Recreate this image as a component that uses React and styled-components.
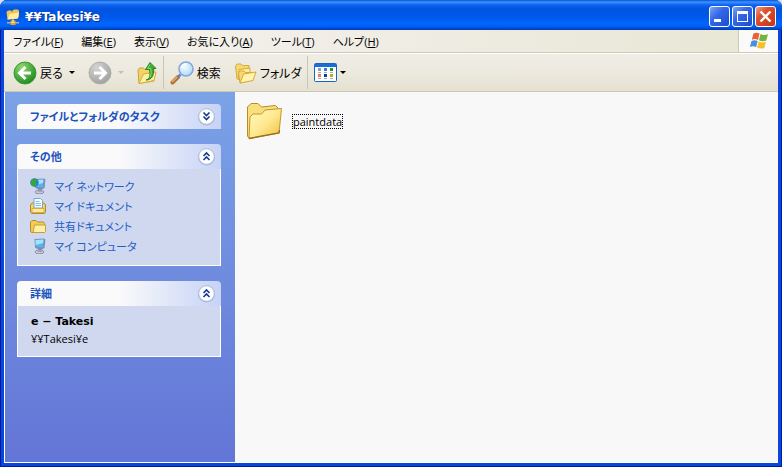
import React from "react";
import styled, { createGlobalStyle, css } from "styled-components";

const menuItems = [
  { label: "ファイル", hotkey: "F" },
  { label: "編集", hotkey: "E" },
  { label: "表示", hotkey: "V" },
  { label: "お気に入り", hotkey: "A" },
  { label: "ツール", hotkey: "T" },
  { label: "ヘルプ", hotkey: "H" }
];

class App extends React.Component {
  render() {
    return (
      <StyledWindow>
        <GlobalStyle />
        <TitleBar />
        <StyledFrame>
          <MenuBar />
          <Toolbar />
          <StyledContent>
            <Sidebar />
            <StyledFiles>
              <StyledFile type="button">
                <FolderLarge />
                <StyledFileName>paintdata</StyledFileName>
              </StyledFile>
            </StyledFiles>
          </StyledContent>
        </StyledFrame>
      </StyledWindow>
    );
  }
}

const TitleBar = () => (
  <StyledTitleBar>
    <NetFolderIcon />
    <StyledTitle>¥¥Takesi¥e</StyledTitle>
    <StyledCaption type="button" aria-label="最小化">
      <svg width="19" height="19" viewBox="0 0 19 19">
        <path d="M4 12h7v3H4z" fill="#fff" />
      </svg>
    </StyledCaption>
    <StyledCaption type="button" aria-label="最大化">
      <svg width="19" height="19" viewBox="0 0 19 19">
        <path d="M4 4h11v11H4zM5 7v7h9V7z" fill="#fff" fillRule="evenodd" />
      </svg>
    </StyledCaption>
    <StyledCaption type="button" aria-label="閉じる" $close>
      <svg width="19" height="19" viewBox="0 0 19 19">
        <path d="M4.500 4.500l10 10M14.500 4.500l-10 10" stroke="#fff" strokeWidth="2.4" />
      </svg>
    </StyledCaption>
  </StyledTitleBar>
);

const MenuBar = () => (
  <StyledMenuBar>
    <StyledMenu>
      {menuItems.map(item => (
        <StyledMenuItem type="button" key={item.hotkey}>
          {item.label}(<u>{item.hotkey}</u>)
        </StyledMenuItem>
      ))}
    </StyledMenu>
    <StyledLogo>
      <WindowsFlag />
    </StyledLogo>
  </StyledMenuBar>
);

const Toolbar = () => (
  <StyledToolbar>
    <StyledGroup>
      <StyledTool type="button">
        <ArrowCircle id="back" light="#8fd870" dark="#1c8a1c" rim="#3a9a35" />
        戻る
      </StyledTool>
      <StyledDrop type="button" aria-label="戻る履歴">
        <Caret />
      </StyledDrop>
      <StyledTool type="button" aria-label="進む" disabled>
        <ArrowCircle id="next" light="#d4d4d2" dark="#a0a0a0" rim="#b0b0ae" flip />
      </StyledTool>
      <StyledDrop type="button" aria-label="進む履歴" disabled>
        <Caret color="#c4c2b4" />
      </StyledDrop>
      <StyledTool type="button" aria-label="上へ">
        <UpIcon />
      </StyledTool>
    </StyledGroup>
    <StyledGroup>
      <StyledTool type="button">
        <SearchIcon />
        検索
      </StyledTool>
      <StyledTool type="button" $spaced>
        <FoldersIcon />
        フォルダ
      </StyledTool>
    </StyledGroup>
    <StyledGroup $last>
      <StyledTool type="button" aria-label="表示方法">
        <ViewsIcon />
        <Caret />
      </StyledTool>
    </StyledGroup>
  </StyledToolbar>
);

const Panel = ({ title, collapsed, children }) => (
  <StyledPanel>
    <StyledPanelHeader>
      <StyledPanelTitle>{title}</StyledPanelTitle>
      <StyledToggle type="button" aria-label={title} aria-expanded={!collapsed}>
        <Chevrons down={collapsed} />
      </StyledToggle>
    </StyledPanelHeader>
    {collapsed ? null : <StyledPanelBody>{children}</StyledPanelBody>}
  </StyledPanel>
);

const Sidebar = () => (
  <StyledSidebar>
    <Panel title="ファイルとフォルダのタスク" collapsed />
    <Panel title="その他">
      <StyledPlace href="#network">
        <NetworkIcon />
        マイ ネットワーク
      </StyledPlace>
      <StyledPlace href="#documents">
        <DocumentsIcon />
        マイ ドキュメント
      </StyledPlace>
      <StyledPlace href="#shared">
        <FolderSmall />
        共有ドキュメント
      </StyledPlace>
      <StyledPlace href="#computer">
        <ComputerIcon />
        マイ コンピュータ
      </StyledPlace>
    </Panel>
    <Panel title="詳細">
      <StyledDetail $bold>e − Takesi</StyledDetail>
      <StyledDetail>¥¥Takesi¥e</StyledDetail>
    </Panel>
  </StyledSidebar>
);

// Icons
const Caret = ({ color = "#000" }) => (
  <svg width="6" height="3" viewBox="0 0 6 3">
    <path d="M0 0h6L3 3z" fill={color} />
  </svg>
);

const Chevrons = ({ down }) => (
  <svg width="19" height="19" viewBox="0 0 19 19">
    <circle cx="9.5" cy="10" r="8.5" fill="#8d9cc8" opacity="0.6" />
    <circle cx="9.5" cy="9.5" r="7.8" fill="#fff" stroke="#b4bede" />
    <path
      d={down ? "M6.5 5.5l3 3 3-3M6.5 9.5l3 3 3-3" : "M6.5 9l3-3 3 3M6.5 13l3-3 3 3"}
      fill="none"
      stroke="#14398f"
      strokeWidth="1.6"
    />
  </svg>
);

const ArrowCircle = ({ id, light, dark, rim, flip }) => (
  <svg width="24" height="24" viewBox="0 0 24 24">
    <defs>
      <radialGradient id={id} cx="0.35" cy="0.25" r="0.8">
        <stop offset="0" stopColor={light} />
        <stop offset="1" stopColor={dark} />
      </radialGradient>
    </defs>
    <circle cx="12" cy="12" r="11" fill={`url(#${id})`} stroke={rim} />
    <path
      d={flip ? "M6 12h11M11.500 6l6 6-6 6" : "M18 12H7M12.500 6l-6 6 6 6"}
      fill="none"
      stroke="#fff"
      strokeWidth="3"
    />
  </svg>
);

const UpIcon = () => (
  <svg width="22" height="24" viewBox="0 0 22 24">
    <path d="M1 9l1.500-2h4L8 8.500h9V20L2 22.500z" fill="#f3d268" stroke="#cda136" />
    <path d="M2 22.500L6.500 13l12.500-2-2 8.500z" fill="#fdf0a4" stroke="#d9ae3c" />
    <path
      d="M9 19c4-1 4.500-4.500 3.500-10.500H8.500L13 1.500l6 6h-3c1.500 6.500-1 11.500-7 11.500z"
      fill="#3fae35"
      stroke="#1e7d1e"
      strokeWidth="0.9"
    />
    <path d="M13 3.500l-2.500 4h3c1 3 .8 6-.3 8.500" fill="none" stroke="#8edb6c" />
  </svg>
);

const SearchIcon = () => (
  <svg width="24" height="24" viewBox="0 0 24 24">
    <defs>
      <radialGradient id="lens" cx="0.4" cy="0.35" r="0.7">
        <stop offset="0" stopColor="#f4fcff" />
        <stop offset="1" stopColor="#a8daf8" />
      </radialGradient>
    </defs>
    <path d="M2.500 21.500l5.500-5.500" stroke="#b5713c" strokeWidth="4" strokeLinecap="round" />
    <path d="M2.500 20.500l5-5" stroke="#efa868" strokeWidth="1.600" strokeLinecap="round" />
    <path d="M7.500 16.500l3-3" stroke="#6d83a8" strokeWidth="2.500" />
    <circle cx="16" cy="8" r="7" fill="url(#lens)" stroke="#86a5dc" strokeWidth="1.600" />
    <path d="M11.500 7a5 5 0 0 1 5-4" fill="none" stroke="#fff" strokeWidth="1.500" />
  </svg>
);

const FoldersIcon = () => (
  <svg width="24" height="24" viewBox="0 0 24 24">
    <g stroke="#d9a93a" strokeLinejoin="round">
      <path d="M2.500 5L4 3h4l1.500 1.500H16V16L5 18.500l-1-1z" fill="#f6d874" />
      <path d="M5 18.500l1-10L17 7v9z" fill="#fdeea2" />
      <path d="M5.500 12L7 10h4l1.500 1.500H20V19L7 22z" fill="#f6d874" />
      <path d="M7 22l3.500-9 12.500-2-3 8.500z" fill="#fff3ae" />
    </g>
  </svg>
);

const ViewsIcon = () => (
  <svg width="23" height="19" viewBox="0 0 23 19">
    <rect x="0.5" y="0.5" width="22" height="18" rx="1" fill="#fff" stroke="#1763c6" />
    <path d="M1 1h21v3H1z" fill="#1b6bd8" />
    <path d="M4 5h3v3H4z" fill="#8a9cc6" />
    <path d="M10 5h3v3h-3z" fill="#2b7be0" />
    <path d="M16 5h3v3h-3z" fill="#169a28" />
    <path d="M4 11h3v3H4z" fill="#ee7d5d" />
    <path d="M10 11h3v3h-3z" fill="#123a9c" />
    <path d="M16 11h3v3h-3z" fill="#b9ab1e" />
    <path d="M4 9.500h3M10 9.500h3M16 9.500h3M4 15.500h3M10 15.500h3M16 15.500h3" stroke="#a8acb4" />
  </svg>
);

const WindowsFlag = () => (
  <svg width="20" height="18" viewBox="0 0 20 18">
    <path d="M4.500 1.500C6.500.3 8.500.5 10.500 1.600L9 8C7 6.800 5 6.800 2.800 7.800z" fill="#ea6236" />
    <path d="M11.500 2c2.500 1.300 4.800 1.300 7.500.2l-1.700 6.300c-2.600 1-5 .9-7.300-.2z" fill="#74b33c" />
    <path d="M2.500 8.900c2.200-1 4.300-.9 6.200.1l-1.600 6.200C5.200 14 3.200 14 .8 15z" fill="#4a8fdd" />
    <path d="M9.700 9.500c2.400 1.100 4.700 1.200 7.300.2l-1.700 6.200c-2.500 1-4.900.8-7.200-.3z" fill="#f6c028" />
  </svg>
);

const NetFolderIcon = () => (
  <svg width="16" height="16" viewBox="0 0 16 16">
    <path d="M1.500 3L3 1.500h3L7.500 3V1.500L9 .5h4l1 1.500V7l-1 2.500-10.500 1z" fill="#f0c64c" />
    <path d="M2.500 10.500L4.500 5l9.500-1.500-1.500 6z" fill="#ffed9b" />
    <path d="M7 10.500h2v2H7z" fill="#e9e4c8" />
    <path d="M2 13h12v1.500H2z" fill="#a8b0a8" />
    <path d="M5.500 11.500h5V16h-5z" fill="#e3a52c" />
    <path d="M6.500 12.500h3V14h-3z" fill="#ffe27a" />
  </svg>
);

const Monitor = () => (
  <g>
    <ellipse cx="9.500" cy="14" rx="4.500" ry="1.800" fill="#c9c8d6" stroke="#77768c" strokeWidth="0.7" />
    <path d="M8 11h4v3H8z" fill="#a3a2b6" />
    <path d="M4.500 1L14 .5l1.500 1-1 8.500-4.500 2.500-5-3z" fill="#7c8db8" />
    <path d="M5.500 2l8-.5-.7 8-6.800-.7z" fill="#4fb7f2" />
    <path d="M5.500 2l8-.5-.4 3.500L5.700 7z" fill="#a2e4ff" />
  </g>
);

const ComputerIcon = () => (
  <svg width="16" height="16" viewBox="0 0 16 16">
    <Monitor />
  </svg>
);

const NetworkIcon = () => (
  <svg width="16" height="16" viewBox="0 0 16 16">
    <Monitor />
    <circle cx="4.500" cy="4.500" r="4.300" fill="#2f7fd0" />
    <path d="M.5 3.500c1-3 5-3.500 6.500-2L5.500 4l1 4C3 9 .5 7 .5 3.500z" fill="#37a637" />
  </svg>
);

const DocumentsIcon = () => (
  <svg width="16" height="16" viewBox="0 0 16 16">
    <path d="M.5 7L2 5h12l1.500 2v7l-1 1.500h-13l-1-1.500z" fill="#f3d266" stroke="#b58a2a" />
    <path d="M4 .5h6.500l2 2V10H4z" fill="#f8fcff" stroke="#7ba4d2" />
    <path d="M5.500 3.500h4M5.500 5.500h5.500M5.500 7.500h5.500" stroke="#88bfe8" />
    <path d="M2 10.500h12v4H2z" fill="#ffeb99" stroke="#d9ad45" />
  </svg>
);

const FolderSmall = () => (
  <svg width="16" height="16" viewBox="0 0 16 16">
    <path d="M.5 4L2 2.500h4L7.500 4h6l1 1.500v9h-13l-1-1.500z" fill="#f3cd58" stroke="#b58a2a" />
    <path d="M3 14.500L4.500 7h11v6.500l-1 1z" fill="#fff0a6" stroke="#cb9c36" />
  </svg>
);

const FolderLarge = () => (
  <svg width="38" height="38" viewBox="0 0 38 38">
    <defs>
      <linearGradient id="front" x1="0" y1="0" x2="1" y2="1">
        <stop offset="0" stopColor="#fffac2" />
        <stop offset="0.5" stopColor="#ffe991" />
        <stop offset="1" stopColor="#eebf3d" />
      </linearGradient>
    </defs>
    <path
      d="M2.500 5L6 1.500h7L16.500 5l14-1.500L33 6v24L4 36.500 2.500 34z"
      fill="#f8de7c"
      stroke="#b98c25"
      strokeLinejoin="round"
    />
    <path
      d="M4 36.500L5 15l3-3h8.500L20 8l16.500-1.500L34 31z"
      fill="url(#front)"
      stroke="#c4962b"
      strokeLinejoin="round"
    />
    <path d="M4 36.500L34 31l.5-3" fill="none" stroke="#98711c" strokeWidth="1.400" />
  </svg>
);

export default App;

// Style
const GlobalStyle = createGlobalStyle`
  * {
    box-sizing: border-box;
  }
  body {
    margin: 0;
    background: #d7e3f4;
    color: #000;
    font: 12px "Open Sans", "Noto Sans CJK JP", sans-serif;
    font-feature-settings: "palt";
  }
  svg {
    display: block;
    flex: none;
  }
`;

const plainButton = css`
  padding: 0;
  border: 0;
  background: none;
  color: inherit;
  font: inherit;
  font-feature-settings: inherit;
`;

const StyledWindow = styled.div`
  display: flex;
  flex-direction: column;
  min-height: 100vh;
  border-radius: 7px 7px 0 0;
  background: #001c9c;
  overflow: hidden;
`;
const StyledTitleBar = styled.header`
  display: flex;
  align-items: center;
  gap: 2px;
  height: 30px;
  padding: 3px 6px 0 5px;
  background: linear-gradient(
    #0a4fd0 0,
    #3c94ff 2px,
    #0d62ee 5px,
    #0054e0 9px,
    #0057e8 17px,
    #0066ff 23px,
    #0062f8 26px,
    #0044c8 29px,
    #0038b0 30px
  );
`;
const StyledTitle = styled.h1`
  flex: 1;
  margin: 0 2px;
  color: #fff;
  font: bold 12px "DejaVu Sans", "Noto Sans CJK JP", sans-serif;
  text-shadow: 1px 1px #0a2a80;
`;
const StyledCaption = styled.button`
  display: grid;
  place-items: center;
  width: 21px;
  height: 21px;
  padding: 0;
  border: 1px solid #fff;
  border-radius: 3px;
  background: ${props =>
    props.$close
      ? "linear-gradient(135deg, #f0a088, #dc5030 35%, #c83410)"
      : "linear-gradient(135deg, #7ca4f4, #3468e8 40%, #1c4cd0)"};
`;

const StyledFrame = styled.main`
  display: flex;
  flex: 1;
  flex-direction: column;
  margin: 0 1px 1px;
  border: solid #0a45dc;
  border-width: 0 3px 3px;
`;

const StyledMenuBar = styled.div`
  display: flex;
  justify-content: space-between;
  height: 23px;
  border-bottom: 1px solid #cfc8b4;
  background: linear-gradient(90deg, #f4f3ef, #efede4 50%, #e8e6d4);
`;
const StyledMenu = styled.nav`
  display: flex;
  gap: 18px;
  padding-left: 9px;
`;
const StyledMenuItem = styled.button`
  ${plainButton}
  font-size: 11px;
  white-space: nowrap;
`;
const StyledLogo = styled.div`
  display: grid;
  place-items: center;
  width: 40px;
  border-left: 1px solid #cfc8b4;
  background: #fafaf8;
`;

const StyledToolbar = styled.div`
  display: flex;
  height: 39px;
  padding: 2px 0;
  border-top: 1px solid #fff;
  border-bottom: 1px solid #cdc8b4;
  background: linear-gradient(#f0ede6, #ebe8dc 60%, #e4e1d0);
`;
const StyledGroup = styled.div`
  display: flex;
  align-items: center;
  gap: 6px;
  padding: 0 4px 0 9px;
  border-right: ${props => (props.$last ? "0" : "1px solid #cac5b4")};

  & + & {
    padding: 0 6px;
  }
`;
const StyledTool = styled.button`
  ${plainButton}
  display: flex;
  align-items: center;
  gap: 3px;
  margin-left: ${props => (props.$spaced ? "6px" : "0")};
  white-space: nowrap;
`;
const StyledDrop = styled.button`
  ${plainButton}
  padding-right: 7px;
`;

const StyledContent = styled.div`
  display: flex;
  flex: 1;
  border: solid #fff;
  border-width: 0 0 1px 1px;
  background: #f8f8f8;
`;
const StyledSidebar = styled.aside`
  display: flex;
  flex: none;
  flex-direction: column;
  gap: 15px;
  width: 230px;
  padding: 12px 14px 12px 12px;
  background: linear-gradient(#7ba2e7, #6375d6);
`;
const StyledPanel = styled.section`
  color: #215dc6;
`;
const StyledPanelHeader = styled.div`
  display: flex;
  align-items: center;
  justify-content: space-between;
  height: 25px;
  padding: 0 5px 0 13px;
  border-radius: 4px 4px 0 0;
  background: linear-gradient(90deg, #fafafa 50%, #c6d3f7);
`;
const StyledPanelTitle = styled.h2`
  margin: 0;
  color: #1c52bc;
  font-size: 11px;
  line-height: 25px;
  white-space: nowrap;
`;
const StyledToggle = styled.button`
  ${plainButton}
`;
const StyledPanelBody = styled.div`
  padding: 7px 12px 9px;
  border: solid #fff;
  border-width: 0 1px 1px;
  background: #d0d8ef;
`;
const StyledPlace = styled.a`
  display: flex;
  align-items: center;
  gap: 8px;
  height: 20px;
  color: inherit;
  font-size: 11px;
  text-decoration: none;
`;
const StyledDetail = styled.p`
  margin: 0;
  padding-left: 1px;
  color: #000;
  font-family: ${props => (props.$bold ? '"DejaVu Sans", sans-serif' : "inherit")};
  font-size: 11px;
  font-weight: ${props => (props.$bold ? "bold" : "normal")};
  line-height: 17px;
`;

const StyledFiles = styled.section`
  flex: 1;
  padding: 10px;
`;
const StyledFile = styled.button`
  ${plainButton}
  display: flex;
  align-items: center;
  gap: 9px;
`;
const StyledFileName = styled.span`
  border: 1px dotted #000;
  font-size: 11px;
  line-height: 13px;
`;
